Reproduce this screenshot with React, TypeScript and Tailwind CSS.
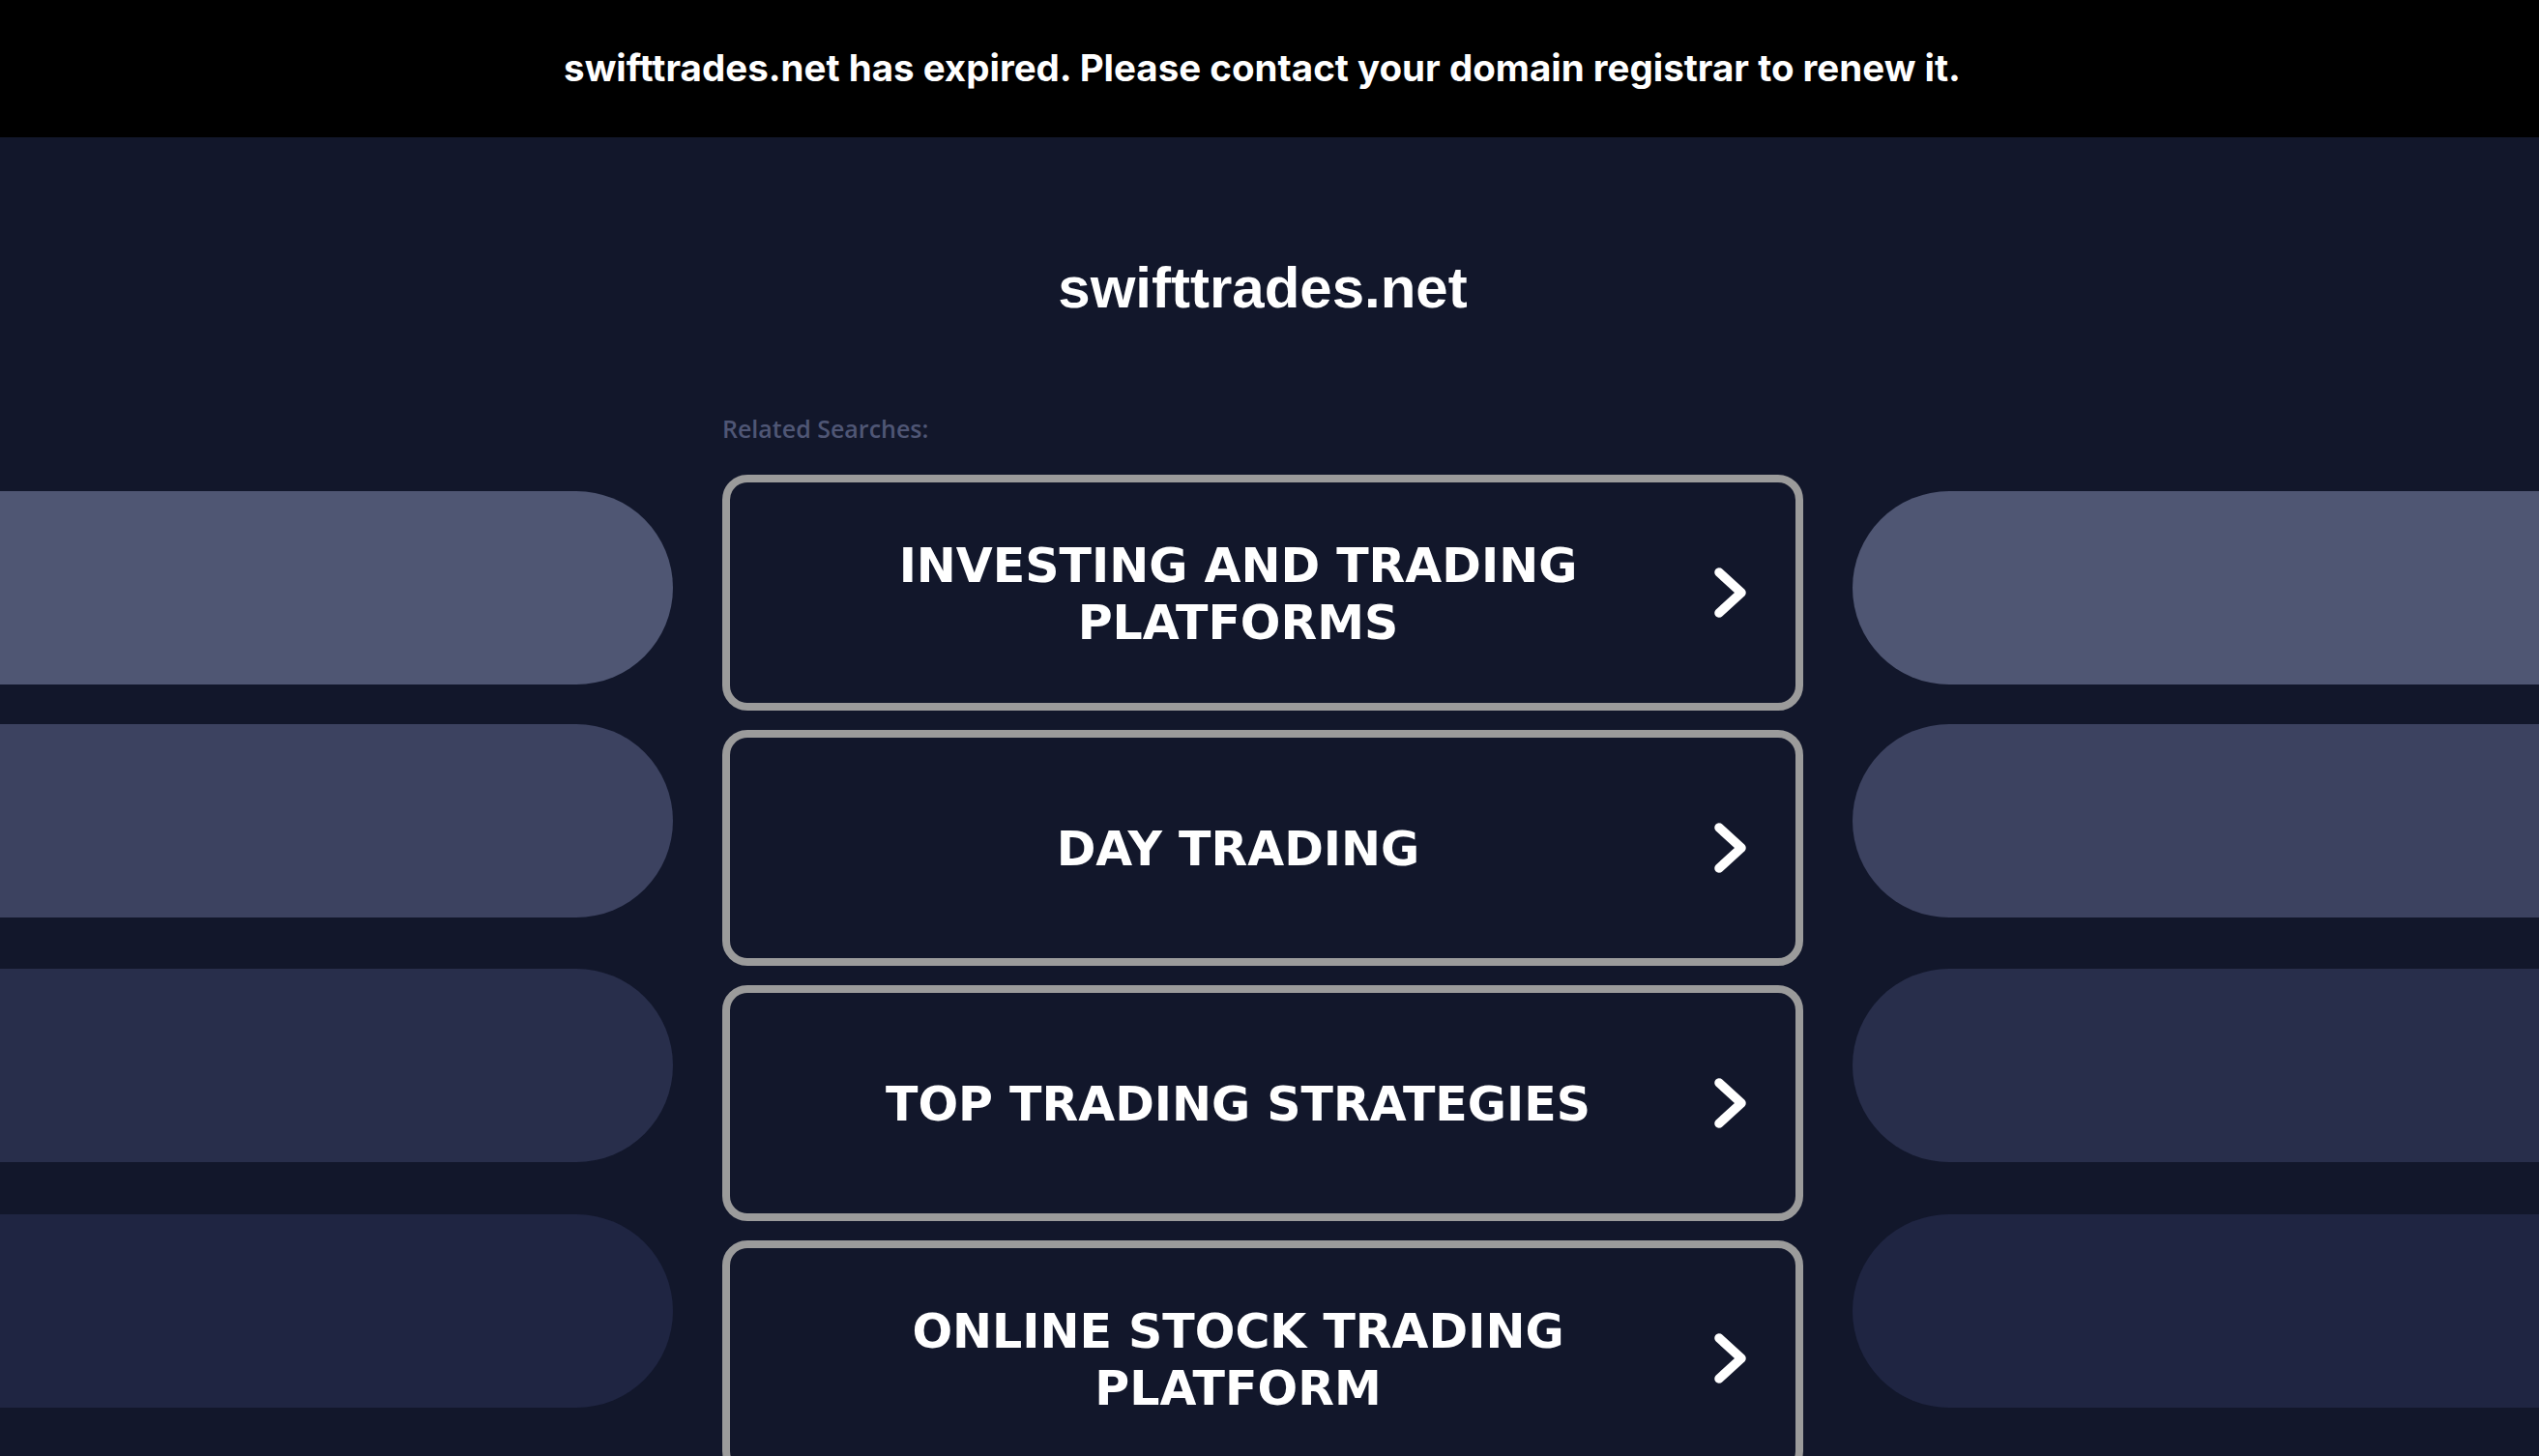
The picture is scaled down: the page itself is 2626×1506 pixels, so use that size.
import React from 'react';

const SEARCHES = [
  'Investing and Trading Platforms',
  'Day Trading',
  'Top Trading Strategies',
  'Online Stock Trading Platform',
];

// side pills, top offsets follow the reference spacing
const PILLS = [
  { color: 'bg-[#4f5673]', mt: 'mt-[17px]' },
  { color: 'bg-[#3c4260]', mt: 'mt-[41px]' },
  { color: 'bg-[#282e4b]', mt: 'mt-[53px]' },
  { color: 'bg-[#1f2542]', mt: 'mt-[54px]' },
];

function Chevron() {
  return (
    <svg width="35" height="54" viewBox="0 0 35 54" fill="none" className="shrink-0">
      <polyline points="6,6 29,27 6,48" stroke="white" strokeWidth="9.5" strokeLinecap="round" strokeLinejoin="round" />
    </svg>
  );
}

function PillColumn({ side }: { side: 'left' | 'right' }) {
  return (
    <div className="flex flex-col">
      {PILLS.map((p, i) => (
        <div
          key={i}
          className={`h-[200px] ${p.color} ${p.mt} ${side === 'left' ? 'rounded-r-full' : 'rounded-l-full'}`}
        />
      ))}
    </div>
  );
}

export default function App() {
  return (
    <div className="min-h-screen bg-[#12172b] overflow-hidden">
      {/* Expired banner */}
      <div className="h-[142px] bg-black flex items-center justify-center pr-[15px]">
        <p className="text-white text-[38.5px] font-bold" style={{ fontFamily: 'Inter, "Liberation Sans", sans-serif' }}>
          swifttrades.net has expired. Please contact your domain registrar to renew it.
        </p>
      </div>

      <div className="grid grid-cols-[696px_1118px_1fr] gap-x-[51px]">
        <div />
        {/* Domain title */}
        <h1
          className="mt-[126px] text-center text-white text-[60px] font-bold leading-none"
          style={{ fontFamily: '"Liberation Sans", Arial, sans-serif' }}
        >
          swifttrades.net
        </h1>
        <div />

        <div />
        <p
          className="mt-[103px] text-[#4f5675] text-[25px] font-semibold leading-none mb-[35px]"
          style={{ fontFamily: '"Open Sans", sans-serif' }}
        >
          Related Searches:
        </p>
        <div />

        <PillColumn side="left" />

        <div className="flex flex-col gap-[20px]">
          {SEARCHES.map(s => (
            <a
              key={s}
              href="#"
              className="h-[244px] border-[8px] border-[#9b9b9b] rounded-[26px] flex items-center pl-[64px] pr-[50px] gap-[30px] bg-[#12172b]"
            >
              <span
                className="flex-1 text-center text-white uppercase font-bold text-[49px] leading-[59px] pt-[3px]"
                style={{ fontFamily: '"DejaVu Sans", Verdana, sans-serif' }}
              >
                {s}
              </span>
              <Chevron />
            </a>
          ))}
        </div>

        <PillColumn side="right" />
      </div>
    </div>
  );
}
